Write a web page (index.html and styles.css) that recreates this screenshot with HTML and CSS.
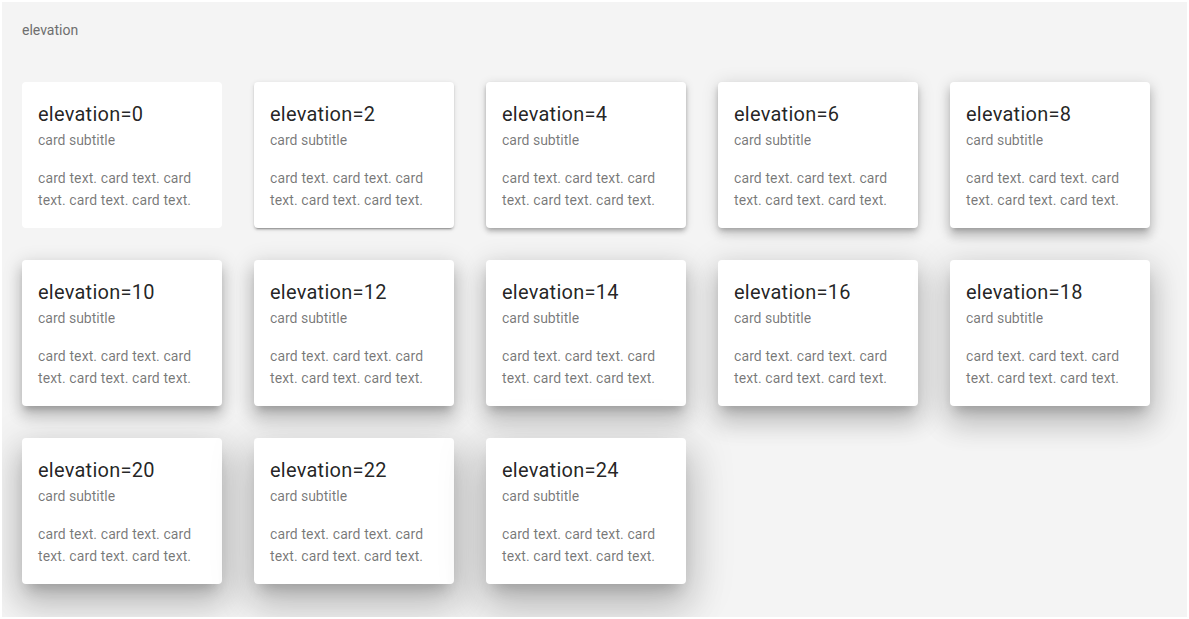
FILE: index.html
```html
<!DOCTYPE html>
<html lang="en">
<head>
<meta charset="utf-8">
<title>elevation</title>
<link rel="stylesheet" href="styles.css">
</head>
<body>
<div class="demo">
  <div class="demo-label">elevation</div>
  <div class="card-grid">
    <div class="card e0"><div class="card-title">elevation=0</div><div class="card-subtitle">card subtitle</div><div class="card-text">card text. card text. card text. card text. card text.</div></div>
    <div class="card e2"><div class="card-title">elevation=2</div><div class="card-subtitle">card subtitle</div><div class="card-text">card text. card text. card text. card text. card text.</div></div>
    <div class="card e4"><div class="card-title">elevation=4</div><div class="card-subtitle">card subtitle</div><div class="card-text">card text. card text. card text. card text. card text.</div></div>
    <div class="card e6"><div class="card-title">elevation=6</div><div class="card-subtitle">card subtitle</div><div class="card-text">card text. card text. card text. card text. card text.</div></div>
    <div class="card e8"><div class="card-title">elevation=8</div><div class="card-subtitle">card subtitle</div><div class="card-text">card text. card text. card text. card text. card text.</div></div>
    <div class="card e10"><div class="card-title">elevation=10</div><div class="card-subtitle">card subtitle</div><div class="card-text">card text. card text. card text. card text. card text.</div></div>
    <div class="card e12"><div class="card-title">elevation=12</div><div class="card-subtitle">card subtitle</div><div class="card-text">card text. card text. card text. card text. card text.</div></div>
    <div class="card e14"><div class="card-title">elevation=14</div><div class="card-subtitle">card subtitle</div><div class="card-text">card text. card text. card text. card text. card text.</div></div>
    <div class="card e16"><div class="card-title">elevation=16</div><div class="card-subtitle">card subtitle</div><div class="card-text">card text. card text. card text. card text. card text.</div></div>
    <div class="card e18"><div class="card-title">elevation=18</div><div class="card-subtitle">card subtitle</div><div class="card-text">card text. card text. card text. card text. card text.</div></div>
    <div class="card e20"><div class="card-title">elevation=20</div><div class="card-subtitle">card subtitle</div><div class="card-text">card text. card text. card text. card text. card text.</div></div>
    <div class="card e22"><div class="card-title">elevation=22</div><div class="card-subtitle">card subtitle</div><div class="card-text">card text. card text. card text. card text. card text.</div></div>
    <div class="card e24"><div class="card-title">elevation=24</div><div class="card-subtitle">card subtitle</div><div class="card-text">card text. card text. card text. card text. card text.</div></div>
  </div>
</div>
</body>
</html>
```

FILE: styles.css
```css
* { box-sizing: border-box; }

html, body {
  margin: 0;
  background: #ffffff;
}

body {
  font-family: Roboto, "Liberation Sans", Arial, sans-serif;
}

.demo {
  margin: 2px;
  height: 615px;
  background: #f4f4f4;
  padding: 18px 20px 0;
  overflow: hidden;
}

.demo-label {
  font-size: 14px;
  line-height: 20px;
  color: #6e6e6e;
  margin-bottom: 42px;
}

.card-grid {
  display: grid;
  grid-template-columns: repeat(5, 200px);
  column-gap: 32px;
  row-gap: 32px;
}

.card {
  width: 200px;
  height: 146px;
  background: #ffffff;
  border-radius: 4px;
  padding: 16px;
}

.card-title {
  font-size: 20px;
  line-height: 32px;
  letter-spacing: 0.0125em;
  color: rgba(0, 0, 0, 0.87);
}

.card-subtitle {
  font-size: 14px;
  line-height: 20px;
  color: rgba(0, 0, 0, 0.54);
}

.card-text {
  margin-top: 17px;
  font-size: 14px;
  line-height: 22px;
  letter-spacing: 0.1px;
  color: rgba(0, 0, 0, 0.54);
}

/* material elevation levels */
.e0 { box-shadow: none; }
.e2 { box-shadow: 0 3px 1px -2px rgba(0,0,0,.2), 0 2px 2px 0 rgba(0,0,0,.14), 0 1px 5px 0 rgba(0,0,0,.12); }
.e4 { box-shadow: 0 2px 4px -1px rgba(0,0,0,.2), 0 4px 5px 0 rgba(0,0,0,.14), 0 1px 10px 0 rgba(0,0,0,.12); }
.e6 { box-shadow: 0 3px 5px -1px rgba(0,0,0,.2), 0 6px 10px 0 rgba(0,0,0,.14), 0 1px 18px 0 rgba(0,0,0,.12); }
.e8 { box-shadow: 0 5px 5px -3px rgba(0,0,0,.2), 0 8px 10px 1px rgba(0,0,0,.14), 0 3px 14px 2px rgba(0,0,0,.12); }
.e10 { box-shadow: 0 6px 6px -3px rgba(0,0,0,.2), 0 10px 14px 1px rgba(0,0,0,.14), 0 4px 18px 3px rgba(0,0,0,.12); }
.e12 { box-shadow: 0 7px 8px -4px rgba(0,0,0,.2), 0 12px 17px 2px rgba(0,0,0,.14), 0 5px 22px 4px rgba(0,0,0,.12); }
.e14 { box-shadow: 0 7px 9px -4px rgba(0,0,0,.2), 0 14px 21px 2px rgba(0,0,0,.14), 0 5px 26px 4px rgba(0,0,0,.12); }
.e16 { box-shadow: 0 8px 10px -5px rgba(0,0,0,.2), 0 16px 24px 2px rgba(0,0,0,.14), 0 6px 30px 5px rgba(0,0,0,.12); }
.e18 { box-shadow: 0 9px 11px -5px rgba(0,0,0,.2), 0 18px 28px 2px rgba(0,0,0,.14), 0 7px 34px 6px rgba(0,0,0,.12); }
.e20 { box-shadow: 0 10px 13px -6px rgba(0,0,0,.2), 0 20px 31px 3px rgba(0,0,0,.14), 0 8px 38px 7px rgba(0,0,0,.12); }
.e22 { box-shadow: 0 10px 14px -6px rgba(0,0,0,.2), 0 22px 35px 3px rgba(0,0,0,.14), 0 8px 42px 7px rgba(0,0,0,.12); }
.e24 { box-shadow: 0 11px 15px -7px rgba(0,0,0,.2), 0 24px 38px 3px rgba(0,0,0,.14), 0 9px 46px 8px rgba(0,0,0,.12); }
```
